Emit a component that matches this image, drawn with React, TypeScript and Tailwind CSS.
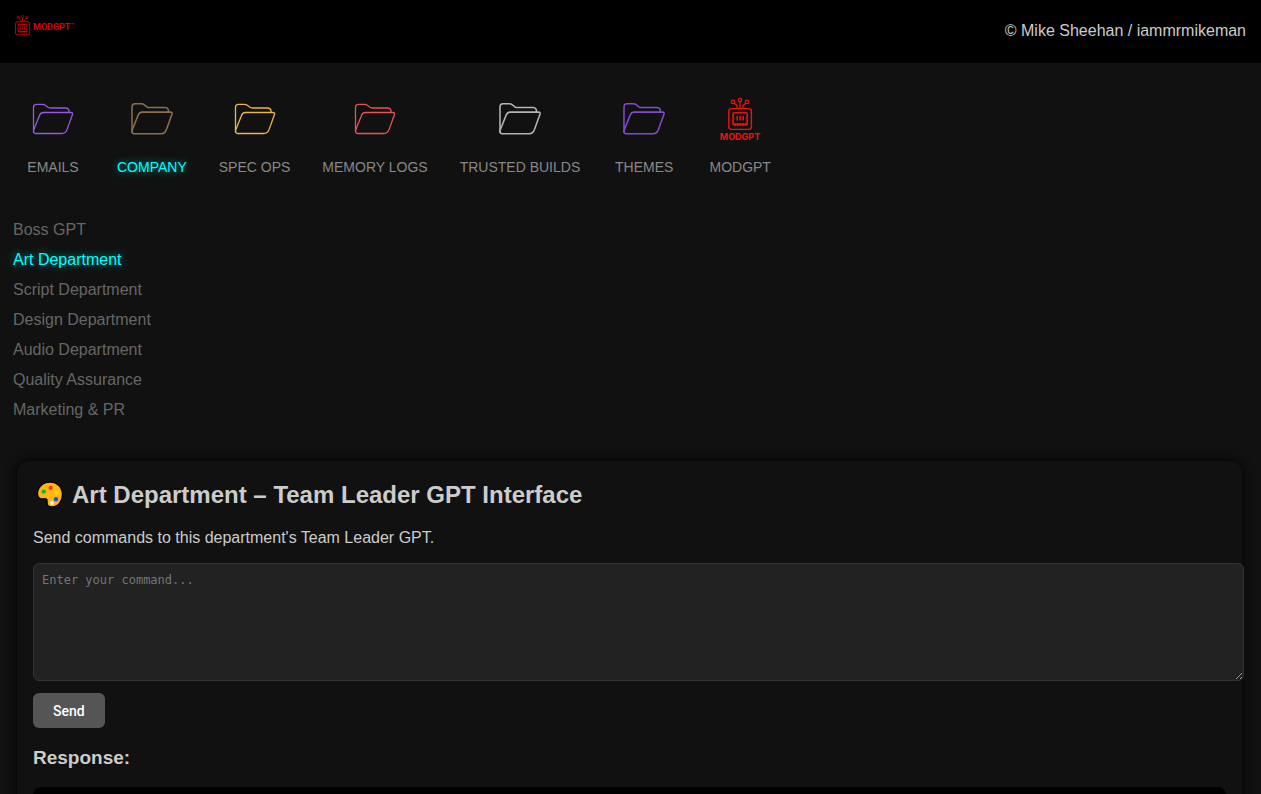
import { useState } from 'react';

type Folder = { label: string; stroke: string; width: number };

const folders: Folder[] = [
  { label: 'EMAILS', stroke: '#9658de', width: 1.3 },
  { label: 'COMPANY', stroke: '#8c6f4e', width: 1.5 },
  { label: 'SPEC OPS', stroke: '#e8b84a', width: 1.3 },
  { label: 'MEMORY LOGS', stroke: '#e25555', width: 1.3 },
  { label: 'TRUSTED BUILDS', stroke: '#b4b4b4', width: 1.5 },
  { label: 'THEMES', stroke: '#7f4ccb', width: 1.5 },
];

const departments = [
  'Boss GPT',
  'Art Department',
  'Script Department',
  'Design Department',
  'Audio Department',
  'Quality Assurance',
  'Marketing & PR',
];

function FolderIcon({ stroke, width }: { stroke: string; width: number }) {
  // Heavier outlines also sit slightly larger in the tile.
  const viewBox = width > 1.4 ? '1 1 62.4 62.4' : '0.2 0 64 64';
  return (
    <svg viewBox={viewBox} className="size-16" fill="none" stroke={stroke} strokeWidth={width} strokeLinejoin="round" strokeLinecap="round" aria-hidden="true">
      <path d="M12.7 45V20.4Q12.7 17.4 15.6 17.4H21.6Q23.4 17.4 24.8 18.5L27.2 20.3Q28.2 21 29.6 21H44.6Q48 21 48.2 24V25.4" />
      <path d="M12.8 43.2L18.7 28.4Q19.9 25.5 22.8 25.5H50.2Q52.4 25.5 51.6 27.8L46.2 42.6Q44.8 46.5 41 46.5H14.8Q12.4 46.5 12.8 43.2Z" />
    </svg>
  );
}

function RobotShape() {
  return (
    <g fill="none" stroke="currentColor" strokeWidth="1.3" strokeLinejoin="round">
      <circle cx="25" cy="14.9" r="1.7" />
      <circle cx="32" cy="13.1" r="1.7" />
      <circle cx="39" cy="14.9" r="1.7" />
      <path d="M26.2 16.2L29 18.6V21.4M32 14.8V21.4M37.8 16.2L35 18.6V21.4" />
      <rect x="20.8" y="21.6" width="22.6" height="20.8" rx="2.6" strokeWidth="1.4" />
      <path d="M26.4 25.8H37.8Q39.2 25.8 39.2 27.2V29.6L38.6 31L39.2 32.4V37.4H25V32.4L25.6 31L25 29.6V27.2Q25 25.8 26.4 25.8Z" strokeWidth="1.6" />
      <path d="M29.2 29V33.6M32.2 29V33.6M35.2 29V33.6" strokeWidth="1.5" />
      <path d="M27 36V39M29.7 36V39M32.4 36V39M35.1 36V39M37.8 36V39" strokeWidth="1.4" />
    </g>
  );
}

function Palette() {
  return (
    <svg viewBox="0.5 1 27 27" className="size-7 shrink-0" role="img" aria-label="Palette">
      <path
        d="M14 2C7 2 2 7 2 13.2C2 16.8 4 18.6 7 18.2C9.6 17.8 11.4 18 11.2 20.2C10.8 23.6 12 26 15.4 26C21.6 26 26 20.8 26 14.2C26 7 21 2 14 2Z"
        fill="#ffb516"
        stroke="#000000"
        strokeWidth="1.2"
      />
      <circle cx="7.9" cy="11.2" r="2.1" fill="#16b81d" />
      <circle cx="14.6" cy="7.6" r="2.1" fill="#f5381f" />
      <circle cx="20.6" cy="12" r="2.1" fill="#ffdd0f" />
      <circle cx="19.8" cy="18.6" r="2.1" fill="#1c4df0" />
      <circle cx="15.9" cy="22.2" r="1.8" fill="#ffffff" />
    </svg>
  );
}

export default function App() {
  const [folder, setFolder] = useState('COMPANY');
  const [department, setDepartment] = useState('Art Department');
  const [command, setCommand] = useState('');

  const glow = 'text-[#00ffff] [text-shadow:0_0_8px_#00ffff99]';

  return (
    <div className="h-screen overflow-y-auto bg-[#111111] font-['Liberation_Sans',Arial,sans-serif] text-base text-[#cccccc] [scrollbar-width:none]">
      <header className="flex h-[63px] items-start justify-between bg-black px-[15px]">
        <a href="#home" className="mt-[15px] flex items-center gap-0.5 text-[#d60000]">
          <svg viewBox="20 10.8 25.6 33.6" className="h-[21px] w-4" aria-hidden="true">
            <RobotShape />
          </svg>
          <span className="flex items-start pt-0.5 font-[Roboto,sans-serif] text-[9px] leading-3 font-bold">
            MODGPT<span className="text-[6px] leading-[8px]">™</span>
          </span>
        </a>
        <p className="mt-[19px] leading-6">© Mike Sheehan / iammrmikeman</p>
      </header>

      <nav aria-label="Folders" className="flex gap-8 px-[21px] pt-6">
        {folders.map((f) => (
          <button key={f.label} type="button" onClick={() => setFolder(f.label)} className="flex min-w-16 cursor-pointer flex-col items-center gap-1.5">
            <FolderIcon stroke={f.stroke} width={f.width} />
            <span className={`text-sm leading-5 whitespace-nowrap ${folder === f.label ? glow : 'text-[#888888]'}`}>{f.label}</span>
          </button>
        ))}
        <button type="button" onClick={() => setFolder('MODGPT')} className="flex min-w-16 cursor-pointer flex-col items-center gap-1.5">
          <svg viewBox="0 0 64 64" className="size-16 text-[#e81414]" aria-hidden="true">
            <RobotShape />
            <text x="32" y="52.5" textAnchor="middle" fill="currentColor" className="font-[Inter,sans-serif] text-[9px] font-bold">
              MODGPT
            </text>
          </svg>
          <span className={`text-sm leading-5 ${folder === 'MODGPT' ? glow : 'text-[#888888]'}`}>MODGPT</span>
        </button>
      </nav>

      <ul className="mt-[38px] px-[13px]">
        {departments.map((d) => (
          <li key={d} className="flex h-[30px] items-center">
            <a
              href="#department"
              onClick={(e) => {
                e.preventDefault();
                setDepartment(d);
              }}
              className={department === d ? glow : 'text-[#666666]'}
            >
              {d}
            </a>
          </li>
        ))}
      </ul>

      <main className="mt-9 mr-[19px] mb-4 ml-[17px] rounded-xl bg-[#111111] p-4 shadow-[0_0_12px_#000000]">
        <h1 className="flex items-center gap-2 pl-[3px] text-2xl leading-9 font-bold">
          <Palette />
          {department} – Team Leader GPT Interface
        </h1>
        <p className="mt-[13px] leading-6">Send commands to this department's Team Leader GPT.</p>
        <textarea
          aria-label="Command"
          value={command}
          onChange={(e) => setCommand(e.target.value)}
          placeholder="Enter your command..."
          className="mt-[13px] block h-[118px] w-[calc(100%+18px)] resize rounded-md border border-[#333333] bg-[#222222] p-2 font-['DejaVu_Sans_Mono',monospace] text-xs leading-4 text-[#cccccc] placeholder:text-[#757575]"
        />
        <button type="button" className="mt-3 block h-[35px] cursor-pointer rounded-md bg-[#555555] px-5 font-[Roboto,sans-serif] text-sm font-medium text-white">
          Send
        </button>
        <h2 className="mt-4 text-[19px] leading-7 font-bold">Response:</h2>
        <div aria-live="polite" className="mt-[15px] min-h-24 rounded-lg bg-black p-4" />
      </main>
    </div>
  );
}
